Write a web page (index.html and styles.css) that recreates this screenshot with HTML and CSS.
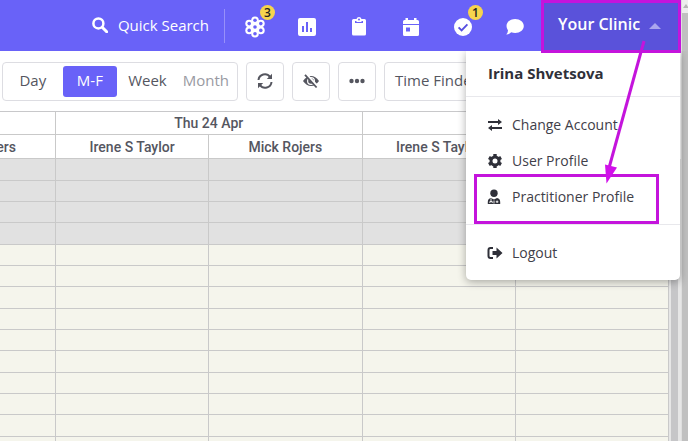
FILE: index.html
```html
<!DOCTYPE html>
<html lang="en">
<head>
<meta charset="utf-8">
<title>Clinic calendar</title>
<link rel="stylesheet" href="styles.css">
</head>
<body>
<div class="app">
  <header class="topbar">
    <button class="search" type="button">
      <svg class="search-icon" viewBox="0 0 16 16"><circle cx="6.4" cy="6.4" r="5" fill="none" stroke="currentColor" stroke-width="2.5"/><path d="M10.2 10.2 14.7 14.7" stroke="currentColor" stroke-width="3" stroke-linecap="round"/></svg>
      <span>Quick Search</span>
    </button>
    <nav class="shortcuts" aria-label="Shortcuts">
      <a href="#" aria-label="Integrations">
        <svg width="20" height="22" viewBox="0 0 20 22"><g fill="currentColor"><circle cx="10" cy="4.200" r="3.800"/><circle cx="10" cy="17.800" r="3.800"/><circle cx="4.100" cy="7.600" r="3.800"/><circle cx="15.900" cy="7.600" r="3.800"/><circle cx="4.100" cy="14.400" r="3.800"/><circle cx="15.900" cy="14.400" r="3.800"/><circle cx="10" cy="11" r="4.500"/></g><g fill="#6962f8"><circle cx="10" cy="4.300" r="1.800"/><circle cx="10" cy="17.700" r="1.800"/><circle cx="4.200" cy="7.600" r="1.800"/><circle cx="15.800" cy="7.600" r="1.800"/><circle cx="4.200" cy="14.400" r="1.800"/><circle cx="15.800" cy="14.400" r="1.800"/><circle cx="10" cy="11" r="1.800"/></g></svg>
        <span class="badge">3</span>
      </a>
      <a href="#" aria-label="Reports">
        <svg width="18" height="18" viewBox="0 0 18 18"><path fill="currentColor" fill-rule="evenodd" d="M2 0H16Q18 0 18 2V16Q18 18 16 18H2Q0 18 0 16V2Q0 0 2 0ZM4 8V14H6V8ZM8 4V14H10V4ZM12 10V14H14V10Z"/></svg>
      </a>
      <a href="#" aria-label="Tasks">
        <svg width="14" height="19" viewBox="0 0 14 19"><path fill="currentColor" fill-rule="evenodd" d="M1.5 2H4.5Q5 0 7 0T9.5 2H12.500Q14 2 14 3.500V17Q14 18.500 12.500 18.500H1.500Q0 18.500 0 17V3.500Q0 2 1.500 2ZM3 4V6H11V4H9.500V5H4.500V4ZM6 2.500A1 1 0 0 0 8 2.500A1 1 0 0 0 6 2.500Z"/></svg>
      </a>
      <a href="#" aria-label="Calendar">
        <svg width="16" height="18" viewBox="0 0 16 18"><path fill="currentColor" fill-rule="evenodd" d="M2.500 0H5V2H11V0H13.500V2H14.500Q16 2 16 3.500V16.500Q16 18 14.500 18H1.500Q0 18 0 16.500V3.500Q0 2 1.500 2H2.500ZM0 6V7H16V6ZM3 9.500V13.500H7V9.500Z"/></svg>
      </a>
      <a href="#" aria-label="Approvals">
        <svg width="18" height="18" viewBox="0 0 18 18"><circle cx="9" cy="9" r="9" fill="currentColor"/><path d="M4.600 9.300 7.600 12.300 13.400 6.300" fill="none" stroke="#564ee0" stroke-width="1.900"/></svg>
        <span class="badge">1</span>
      </a>
      <a href="#" aria-label="Messages">
        <svg width="18" height="16" viewBox="0 0 18 16"><path fill="currentColor" d="M9.200 0C14 0 17.800 3 17.800 7S14 14 9.200 14Q7 14 5.200 13.300Q3 15.500.2 15.600Q1.900 13.600 2 11.400Q.500 9.400.500 7C.500 3 4.400 0 9.200 0Z"/></svg>
      </a>
    </nav>
    <button class="clinic" type="button" aria-expanded="true"><span>Your Clinic</span><i class="caret"></i></button>
  </header>

  <div class="toolbar">
    <div class="views">
      <button type="button">Day</button>
      <button type="button" class="active">M-F</button>
      <button type="button">Week</button>
      <button type="button" class="muted">Month</button>
    </div>
    <button class="tool" type="button" aria-label="Refresh">
      <svg width="16" height="16" viewBox="0 0 16 16" fill="none" stroke="currentColor" stroke-width="2"><path d="M1.500 7A6.300 6.300 0 0 1 13 4M14.500 9A6.300 6.300 0 0 1 3 12"/><path d="M15 .800V6H9.800ZM1 15.200V10H6.200Z" fill="currentColor" stroke="none"/></svg>
    </button>
    <button class="tool" type="button" aria-label="Hide">
      <svg width="18" height="16" viewBox="0 0 18 16"><path d="M1 8Q4.500 3 9 3T17 8Q13.500 13 9 13T1 8Z" fill="currentColor"/><circle cx="9" cy="8" r="3.400" fill="none" stroke="#fff" stroke-width="1.200"/><path d="M3.800 1.200 15.200 13.200" stroke="#fff" stroke-width="3"/><path d="M3 1.800 14.600 14.500" stroke="currentColor" stroke-width="1.800"/></svg>
    </button>
    <button class="tool" type="button" aria-label="More">
      <svg width="16" height="6" viewBox="0 0 16 6" fill="currentColor"><circle cx="2.500" cy="3" r="2.200"/><circle cx="8" cy="3" r="2.200"/><circle cx="13.500" cy="3" r="2.200"/></svg>
    </button>
    <button class="finder" type="button">Time Finder</button>
  </div>

  <main class="calendar">
    <table>
      <colgroup><col class="edge"><col><col><col><col></colgroup>
      <thead>
        <tr class="days"><th></th><th colspan="2">Thu 24 Apr</th><th colspan="2"></th></tr>
        <tr class="people"><th class="first">ers</th><th>Irene S Taylor</th><th>Mick Rojers</th><th>Irene S Taylor</th><th></th></tr>
      </thead>
      <tbody>
        <tr class="closed"><td></td><td></td><td></td><td></td><td></td></tr>
        <tr class="closed"><td></td><td></td><td></td><td></td><td></td></tr>
        <tr class="closed"><td></td><td></td><td></td><td></td><td></td></tr>
        <tr class="closed"><td></td><td></td><td></td><td></td><td></td></tr>
        <tr><td></td><td></td><td></td><td></td><td></td></tr>
        <tr><td></td><td></td><td></td><td></td><td></td></tr>
        <tr><td></td><td></td><td></td><td></td><td></td></tr>
        <tr><td></td><td></td><td></td><td></td><td></td></tr>
        <tr><td></td><td></td><td></td><td></td><td></td></tr>
        <tr><td></td><td></td><td></td><td></td><td></td></tr>
        <tr><td></td><td></td><td></td><td></td><td></td></tr>
        <tr><td></td><td></td><td></td><td></td><td></td></tr>
        <tr><td></td><td></td><td></td><td></td><td></td></tr>
        <tr><td></td><td></td><td></td><td></td><td></td></tr>
      </tbody>
    </table>
    <div class="inner-scroll"></div>
  </main>

  <nav class="menu" aria-label="Account">
    <h2>Irina Shvetsova</h2>
    <ul>
      <li><a href="#"><svg viewBox="0 0 16 16"><path d="M1 5H12M4 11H15" stroke="currentColor" stroke-width="1.800"/><path d="M11 2 15 5 11 8ZM5 8 1 11 5 14Z" fill="currentColor"/></svg>Change Account</a></li>
      <li><a href="#"><svg viewBox="0 0 16 16"><circle cx="8" cy="8" r="4" fill="none" stroke="currentColor" stroke-width="3"/><path d="M8 1V4M8 12V15M1.900 4.500 4.500 6M11.500 10 14.100 11.500M1.900 11.500 4.500 10M11.500 6 14.100 4.500" stroke="currentColor" stroke-width="3.400"/></svg>User Profile</a></li>
      <li><a href="#"><svg viewBox="0 0 16 16"><circle cx="7" cy="4.300" r="3.700" fill="currentColor"/><path d="M.800 15V13Q.800 9.500 4 9L7 10.500 10 9Q13.200 9.500 13.200 13V15Z" fill="currentColor"/><path d="M4 9.500V12M2.900 14V12.500H5.200V14M7 11.500V14.500M8.800 12.800H11.400M10.100 11.500V14" fill="none" stroke="#fff" stroke-width=".900"/></svg>Practitioner Profile</a></li>
    </ul>
    <ul>
      <li><a href="#"><svg viewBox="0 0 16 16"><path d="M6 3H3.500Q1.500 3 1.500 5V11Q1.500 13 3.500 13H6" fill="none" stroke="currentColor" stroke-width="2"/><path d="M5.500 6H9.500V2.500L15.500 8 9.500 13.500V10H5.500Z" fill="currentColor"/></svg>Logout</a></li>
    </ul>
  </nav>
</div>
<div class="page-scroll"><i class="scroll-arrow"></i></div>

<svg class="callout" width="210" height="226" viewBox="0 0 210 226" fill="none" stroke="#c414dc" stroke-width="3">
  <path d="M69.500 1.500H206.500V51.500H69.500Z"/>
  <path d="M2.500 175.500H184.500V222.500H2.500Z"/>
  <path d="M171 41 136 168"/>
  <path d="M132 164.500 144 167.500 133.500 183.500Z" fill="#d110ea" stroke="none"/>
</svg>
</body>
</html>
```
FILE: styles.css
```css
* { box-sizing: border-box; }

body {
  margin: 0;
  height: 100vh;
  display: flex;
  position: relative;
  overflow: hidden;
  background: #fff;
  color: #55565f;
  font: 15px/20px "Open Sans", "Noto Sans", sans-serif;
}

button {
  margin: 0;
  padding: 0;
  border: 0;
  background: none;
  color: inherit;
  font: inherit;
}

a { color: inherit; text-decoration: none; }
svg { display: block; flex: none; }

.app {
  flex: 1;
  min-width: 0;
  display: flex;
  flex-direction: column;
  position: relative;
}

/* Top bar */
.topbar {
  height: 51px;
  flex: none;
  display: flex;
  justify-content: flex-end;
  align-items: center;
  background: #6962f8;
  color: #fff;
}

.search {
  display: flex;
  align-items: center;
  gap: 10px;
  height: 34px;
  padding: 0 15px 2px 0;
  border-right: 1px solid #9790fa;
}

.search-icon { width: 16px; height: 16px; }

.shortcuts { display: flex; padding-left: 4px; }

.shortcuts a {
  position: relative;
  width: 52px;
  height: 51px;
  padding-top: 2px;
  display: flex;
  align-items: center;
  justify-content: center;
}

.badge {
  position: absolute;
  top: 5px;
  left: 31px;
  width: 15px;
  height: 15px;
  border-radius: 50%;
  background: #f6d44e;
  color: #222;
  font-size: 12px;
  font-weight: 600;
  line-height: 15px;
  text-align: center;
}

.clinic {
  width: 140px;
  height: 51px;
  padding: 0 0 4px 17px;
  display: flex;
  align-items: center;
  gap: 9px;
  background: #5a52da;
  font-size: 16px;
  font-weight: 600;
}

.caret {
  margin-top: 4px;
  border: 6px solid transparent;
  border-top: 0;
  border-bottom: 6px solid #aaa5ee;
}

/* Toolbar */
.toolbar {
  display: flex;
  gap: 8px;
  padding: 11px 2px 10px;
  height: 60px;
  flex: none;
}

.views, .tool, .finder {
  height: 39px;
  border: 1px solid #dddde2;
  border-radius: 4px;
}

.views {
  width: 236px;
  display: flex;
  align-items: center;
}

.views button { height: 31px; padding: 0 8px 3px; }
.views button:first-child { width: 60px; }
.views .active { width: 55px; margin-right: 3px; border-radius: 3px; background: #6962f8; color: #fff; }
.views .muted { color: #999aa2; }

.tool {
  width: 38px;
  padding-bottom: 2px;
  display: flex;
  align-items: center;
  justify-content: center;
}

.finder { padding: 0 10px 3px; }

/* Calendar */
.calendar { display: flex; flex: 1; min-height: 0; align-items: flex-start; }

table {
  flex: 1;
  table-layout: fixed;
  width: 100%;
  border-collapse: separate;
  border-spacing: 0;
  border-top: 1px solid #c8c8ca;
  font: 500 14px/18px Roboto, sans-serif;
}

.edge { width: 56px; }

th, td {
  padding: 0;
  border-right: 1px solid #c9c9c9;
  border-bottom: 1px solid #c9c9c9;
}

th { font-weight: 500; }
.first { padding-right: 40px; text-align: right; direction: rtl; }
.days th { height: 23px; }
.people th { height: 24px; }
td { height: 21px; background: #f5f5ec; }
tr:nth-child(3n + 1) td { height: 22px; }
.closed td { background: #e1e1e1; }

.inner-scroll {
  width: 12px;
  align-self: stretch;
  margin-top: 48px;
  background: #c6c6c8;
  border: solid #e6e6e6;
  border-width: 0 3px 0 2px;
}

/* Account menu */
.menu {
  position: absolute;
  z-index: 2;
  top: 51px;
  right: 1px;
  width: 214px;
  border-radius: 0 0 5px 5px;
  background: #fff;
  box-shadow: 0 2px 8px rgba(0, 0, 0, .32);
  clip-path: inset(0 -12px -12px -12px);
  color: #3f4049;
  font-size: 14px;
}

.menu h2 {
  margin: 0;
  padding: 12px 22px 13px;
  color: #2f3039;
  font-size: 15px;
  font-weight: 700;
  line-height: 20px;
}

.menu ul {
  margin: 0;
  padding: 10px 0 9px;
  border-top: 1px solid #e8e8ec;
  list-style: none;
}

.menu a {
  display: flex;
  align-items: center;
  gap: 9px;
  height: 36px;
  padding-left: 21px;
}

.menu svg { width: 16px; height: 16px; color: #2f3039; }

/* Page scrollbar */
.page-scroll {
  width: 7px;
  flex: none;
  border-left: 1px solid #dedede;
  background: #c0c0c0;
}

.scroll-arrow {
  display: block;
  height: 13px;
  padding: 4px 0 0 1px;
  background: #ededed;
}

.scroll-arrow::before {
  content: "";
  display: block;
  width: 0;
  border: 3px solid transparent;
  border-top: 0;
  border-bottom: 4px solid #b5b5b5;
}

/* Highlight boxes and arrow */
.callout {
  position: absolute;
  z-index: 3;
  top: 0;
  right: 5px;
  pointer-events: none;
}
```
